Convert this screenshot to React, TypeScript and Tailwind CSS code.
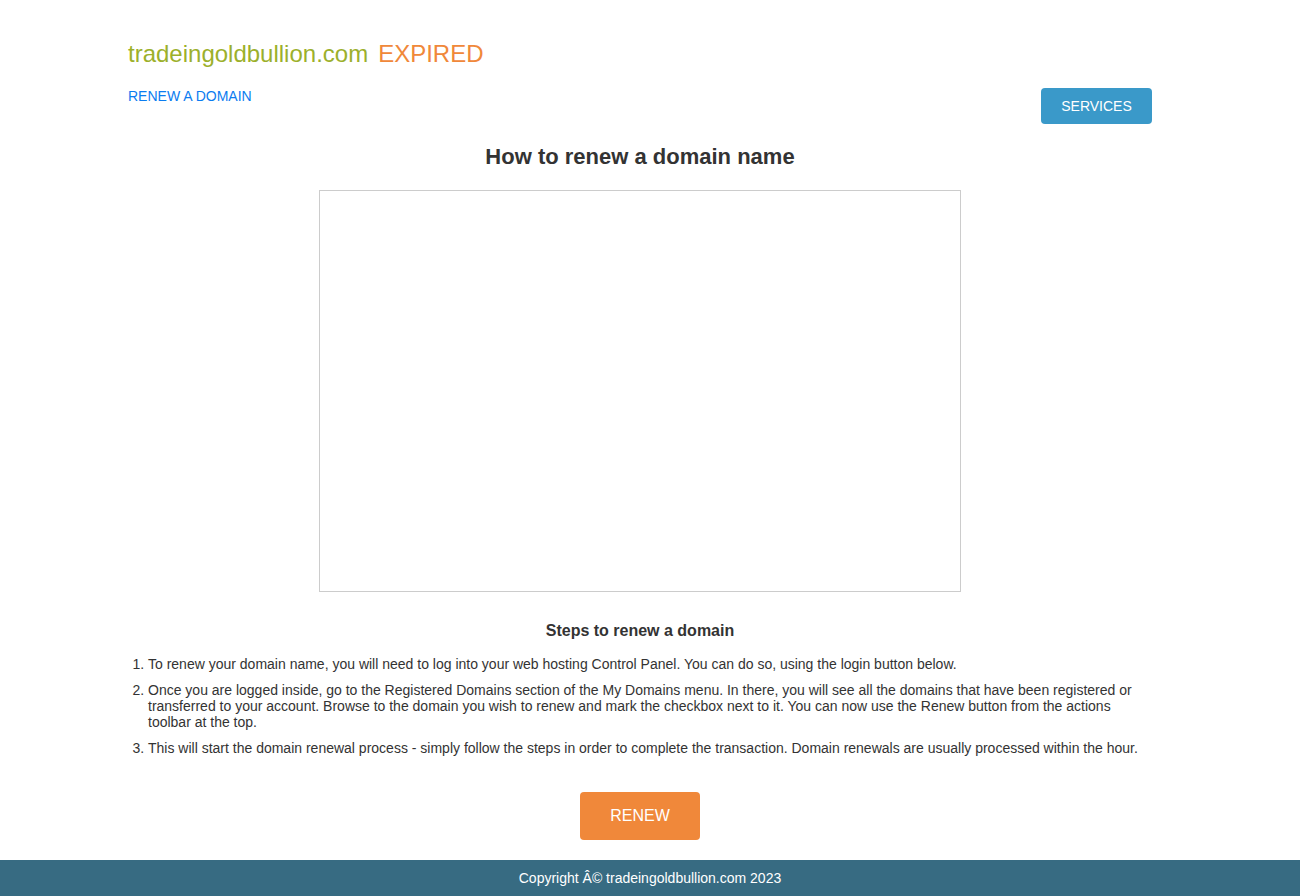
export default function App() {
  return (
    <div className="min-h-[896px] flex flex-col bg-white text-[#333] font-['Liberation_Sans',Arial,sans-serif]">
      <main className="flex-1 w-[1044px] mx-auto pr-[20px] pt-[40px]">
        <h1 className="text-[24px] leading-[28px] flex gap-[10px]">
          <span className="text-[#9cb02b]">tradeingoldbullion.com</span>
          <span className="text-[#f0883a]">EXPIRED</span>
        </h1>

        <div className="mt-[20px] flex justify-between items-start">
          <a href="#" className="text-[14px] leading-[16px] text-[#0b7cf0]">
            RENEW A DOMAIN
          </a>
          <button className="w-[111px] h-[36px] rounded-[4px] bg-[#3a99c9] text-white text-[14px]">
            SERVICES
          </button>
        </div>

        <h2 className="mt-[21px] text-center text-[22px] leading-[24px] font-bold">
          How to renew a domain name
        </h2>

        <div className="mt-[21px] mx-auto w-[642px] h-[402px] border border-[#cccccc]"></div>

        <h3 className="mt-[31px] text-center text-[16px] leading-[16px] font-bold">
          Steps to renew a domain
        </h3>

        <ol className="mt-[17px] pl-[20px] list-decimal text-[14px] leading-[16px]">
          <li className="mb-[10px]">
            To renew your domain name, you will need to log into your web hosting Control Panel. You can do so, using the login button below.
          </li>
          <li className="mb-[10px]">
            Once you are logged inside, go to the Registered Domains section of the My Domains menu. In there, you will see all the domains that have been registered or transferred to your account. Browse to the domain you wish to renew and mark the checkbox next to it. You can now use the Renew button from the actions toolbar at the top.
          </li>
          <li>
            This will start the domain renewal process - simply follow the steps in order to complete the transaction. Domain renewals are usually processed within the hour.
          </li>
        </ol>

        <div className="mt-[36px] mb-[20px] flex justify-center">
          <button className="w-[120px] h-[48px] rounded-[4px] bg-[#f0883a] text-white text-[16px]">
            RENEW
          </button>
        </div>
      </main>

      <footer className="h-[36px] bg-[#376b82] flex items-center justify-center text-white text-[14px]">
        Copyright Â© tradeingoldbullion.com 2023
      </footer>
    </div>
  );
}
